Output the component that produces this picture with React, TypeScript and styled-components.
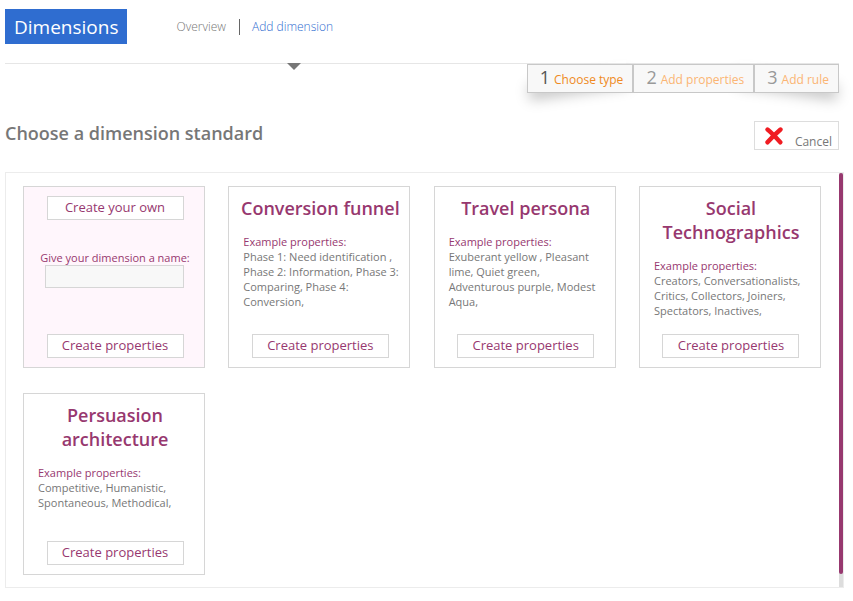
import React from "react";
import styled, { createGlobalStyle } from "styled-components";

const plum = "#97386f";

const GlobalStyle = createGlobalStyle`
  * { box-sizing: border-box; }
  body {
    margin: 0;
    background: #fff;
    color: #777;
    font-family: "Open Sans", sans-serif;
    font-size: 12px;
  }
  button, input { font: inherit; }
`;

const Page = styled.div`
  padding: 9px 9px 13px 5px;
`;

const Header = styled.header`
  display: flex;
  align-items: flex-start;
  height: 55px;
  margin-right: 5px;
  border-bottom: 1px solid #e6e6e6;
`;

const Brand = styled.h1`
  margin: 0;
  padding: 2px 9px 0;
  background: #2f6dd0;
  color: #fff;
  font-size: 19px;
  font-weight: 400;
  line-height: 33px;
`;

const Nav = styled.nav`
  display: flex;
  align-items: center;
  height: 36px;
  margin-left: 49px;
`;

const NavLink = styled.a<{ $active?: boolean }>`
  position: relative;
  color: ${(p) => (p.$active ? "#2f6dd0" : "#777")};
  font-weight: 300;
  line-height: 16px;
  text-decoration: none;

  &::after {
    content: "";
    display: ${(p) => (p.$active ? "block" : "none")};
    position: absolute;
    top: 44px;
    left: 50%;
    margin-left: -6px;
    border: 7px solid transparent;
    border-top-color: #777;
    border-bottom: 0;
  }
`;

const Divider = styled.span`
  width: 1px;
  height: 16px;
  margin: 0 12px 0 13px;
  background: #666;
`;

const Steps = styled.ol`
  position: relative;
  z-index: 0;
  display: flex;
  width: max-content;
  margin: 0 5px 0 auto;
  padding: 0;
  list-style: none;

  &::before,
  &::after {
    content: "";
    position: absolute;
    z-index: -1;
    bottom: 12px;
    width: 32%;
    height: 14px;
    box-shadow: 0 12px 14px rgba(0, 0, 0, 0.25);
  }
  &::before {
    left: 0;
    transform: rotate(-8deg);
  }
  &::after {
    right: 0;
    transform: rotate(8deg);
  }
`;

const Step = styled.li<{ $current?: boolean }>`
  height: 29px;
  padding: 0 9px 0 12px;
  border: 1px solid #c8c8c8;
  background: #f8f8f8;
  color: ${(p) => (p.$current ? "#ef8a22" : "#fbb573")};
  line-height: 25px;
  white-space: nowrap;
`;

const StepNumber = styled.span<{ $current?: boolean }>`
  margin-right: 4px;
  color: ${(p) => (p.$current ? "#555" : "#999")};
  font-size: 18px;
`;

const TitleBar = styled.div`
  display: flex;
  align-items: flex-start;
  justify-content: space-between;
  margin: 28px 5px 22px 0;
`;

const Title = styled.h2`
  margin: 0;
  font-size: 18px;
  font-weight: 600;
  line-height: 24px;
`;

const CancelButton = styled.button`
  display: flex;
  align-items: flex-start;
  gap: 12px;
  height: 29px;
  padding: 5px 6px 0 10px;
  border: 1px solid #ddd;
  background: #fff;
  color: #777;
  line-height: 30px;
`;

const Panel = styled.main`
  display: flex;
  border: 1px solid #ececec;
`;

const Cards = styled.div`
  flex: 1;
  display: grid;
  grid-template-columns: repeat(auto-fill, 182px);
  justify-content: space-between;
  row-gap: 25px;
  padding: 13px 18px 12px 17px;
`;

const ScrollTrack = styled.div`
  width: 4px;
  padding-bottom: 13px;
  background: #ddd;
`;

const ScrollThumb = styled.div`
  height: 100%;
  border-radius: 2px;
  background: ${plum};
`;

const Card = styled.article<{ $tinted?: boolean }>`
  display: flex;
  flex-direction: column;
  align-items: center;
  min-height: 182px;
  padding: 9px 7px 9px 9px;
  border: 1px solid #d6d6d6;
  background: ${(p) => (p.$tinted ? "#fff6fc" : "#fff")};
`;

const CardTitle = styled.h3`
  margin: 0 0 14px;
  color: ${plum};
  font-size: 18px;
  font-weight: 600;
  line-height: 24px;
  text-align: center;
`;

const Examples = styled.p`
  align-self: stretch;
  margin: 0;
  padding-left: 5px;
  font-size: 11px;
  line-height: 15px;

  strong {
    display: block;
    color: ${plum};
    font-weight: 400;
  }
`;

const CardButton = styled.button`
  width: 137px;
  height: 24px;
  padding: 0 0 2px;
  border: 1px solid #d6d6d6;
  background: #fff;
  color: ${plum};
  font-size: 13px;
  line-height: 20px;
`;

const CreateButton = styled(CardButton)`
  margin-top: auto;
`;

const NameField = styled.label`
  display: flex;
  flex-direction: column;
  align-items: center;
  margin-top: 30px;
  color: ${plum};
  font-size: 11px;
  line-height: 15px;
  white-space: nowrap;
`;

const NameInput = styled.input`
  width: 139px;
  height: 23px;
  margin-right: 2px;
  padding: 0 4px;
  border: 1px solid #d6d6d6;
  background: #f8f8f8;
`;

const steps = ["Choose type", "Add properties", "Add rule"];

const standards = [
  {
    title: "Conversion funnel",
    examples:
      "Phase 1: Need identification , Phase 2: Information, Phase 3: Comparing, Phase 4: Conversion,",
  },
  {
    title: "Travel persona",
    examples:
      "Exuberant yellow , Pleasant lime, Quiet green, Adventurous purple, Modest Aqua,",
  },
  {
    title: "Social Technographics",
    examples:
      "Creators, Conversationalists, Critics, Collectors, Joiners, Spectators, Inactives,",
  },
  {
    title: "Persuasion architecture",
    examples: "Competitive, Humanistic, Spontaneous, Methodical,",
  },
];

function CrossIcon() {
  return (
    <svg width="18" height="18" viewBox="0 0 18 18" aria-hidden="true">
      <path
        d="M2.5 2.5 Q7 6 15.3 15.3 M15.5 2.5 Q9 8 2.5 15.3"
        fill="none"
        stroke="#f01c22"
        strokeWidth="4.4"
        strokeLinecap="round"
      />
    </svg>
  );
}

export default function App() {
  return (
    <>
      <GlobalStyle />
      <Page>
        <Header>
          <Brand>Dimensions</Brand>
          <Nav>
            <NavLink href="#overview">Overview</NavLink>
            <Divider />
            <NavLink href="#add" $active>
              Add dimension
            </NavLink>
          </Nav>
        </Header>
        <Steps>
          {steps.map((label, i) => (
            <Step key={label} $current={i === 0}>
              <StepNumber $current={i === 0}>{i + 1}</StepNumber>
              {label}
            </Step>
          ))}
        </Steps>
        <TitleBar>
          <Title>Choose a dimension standard</Title>
          <CancelButton type="button">
            <CrossIcon />
            <span>Cancel</span>
          </CancelButton>
        </TitleBar>
        <Panel>
          <Cards>
            <Card $tinted>
              <CardButton type="button">Create your own</CardButton>
              <NameField>
                Give your dimension a name:
                <NameInput type="text" />
              </NameField>
              <CreateButton type="button">Create properties</CreateButton>
            </Card>
            {standards.map((s) => (
              <Card key={s.title}>
                <CardTitle>{s.title}</CardTitle>
                <Examples>
                  <strong>Example properties:</strong>
                  {s.examples}
                </Examples>
                <CreateButton type="button">Create properties</CreateButton>
              </Card>
            ))}
          </Cards>
          <ScrollTrack>
            <ScrollThumb />
          </ScrollTrack>
        </Panel>
      </Page>
    </>
  );
}
